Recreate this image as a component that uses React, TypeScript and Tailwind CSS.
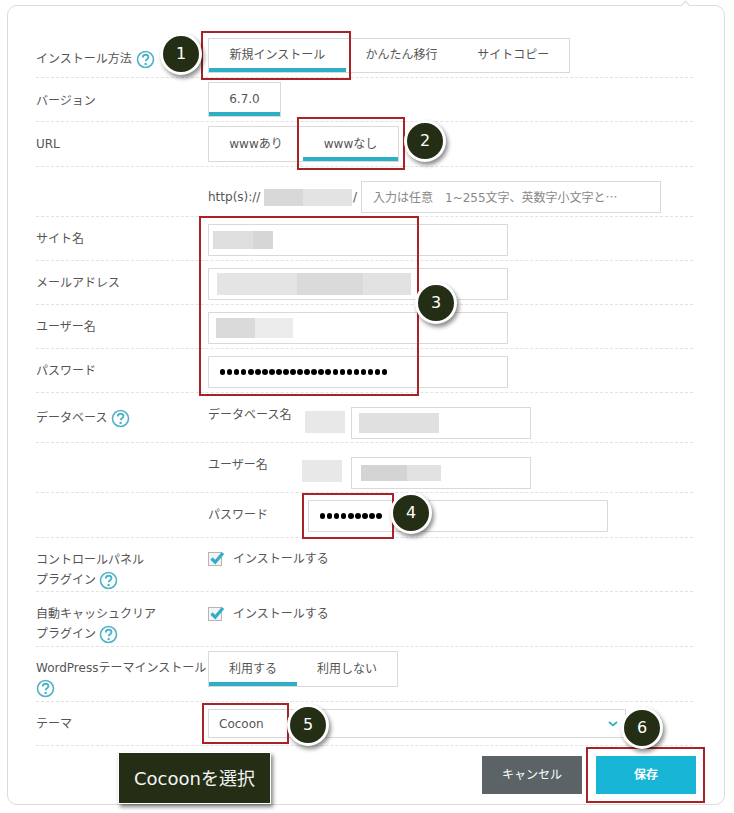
import React from 'react';

const font = { fontFamily: '"DejaVu Sans", "Noto Sans CJK JP", sans-serif' };

function Help({ className = '' }: { className?: string }) {
  return (
    <svg className={`inline-block w-[19px] h-[19px] ${className}`} viewBox="0 0 19 19" fill="none">
      <circle cx="9.5" cy="9.5" r="8" stroke="#4fb3c8" strokeWidth="1.6" />
      <path d="M6.8 7.4c0-1.6 1.2-2.6 2.8-2.6s2.8 1 2.8 2.3c0 1.1-.6 1.7-1.5 2.3-.8.5-1.2 1-1.2 1.8" stroke="#4fb3c8" strokeWidth="1.9" />
      <circle cx="9.6" cy="14" r="1.2" fill="#4fb3c8" />
    </svg>
  );
}

function Row({ h, pt, label, children }: { h: string; pt: string; label?: React.ReactNode; children?: React.ReactNode }) {
  return (
    <div className={`flex border-b border-dashed border-[#e2e2e2] ${h}`}>
      <div className="w-[172px] shrink-0 text-[12px] leading-[20px] text-[#555]">{label}</div>
      <div className={`flex-1 ${pt}`}>{children}</div>
    </div>
  );
}

function Tab({ text, w, active }: { text: string; w: string; active?: boolean }) {
  return (
    <div className={`relative flex items-center justify-center ${w}`}>
      <span className="mb-[1px]">{text}</span>
      {active && <div className="absolute left-0 right-0 bottom-0 h-[4px] bg-[#2eafc8]" />}
    </div>
  );
}

function Field({ w, h = 'h-[32px]', children }: { w: string; h?: string; children?: React.ReactNode }) {
  return <div className={`flex items-center border border-[#d9d9d9] bg-white ${w} ${h}`}>{children}</div>;
}

function Check({ pt }: { pt: string }) {
  return (
    <div className={`flex items-center gap-[11px] ${pt}`}>
      <div className="relative w-[14px] h-[14px] border border-[#b5b5b5] bg-[#f4f4f4]">
        <svg className="absolute left-0 -top-[3px] w-[17px] h-[16px]" viewBox="0 0 17 16" fill="none">
          <path d="M2.5 8.5l3.7 3.7L14 3" stroke="#2eafc8" strokeWidth="3.2" />
        </svg>
      </div>
      <span className="mt-[1px]">インストールする</span>
    </div>
  );
}

const redBoxes = [
  'left-[201px] top-[31px] w-[150px] h-[49px]',
  'left-[297px] top-[117px] w-[108px] h-[53px]',
  'left-[199px] top-[216px] w-[220px] h-[180px]',
  'left-[302px] top-[493px] w-[92px] h-[46px]',
  'left-[202px] top-[703px] w-[87px] h-[41px]',
  'left-[586px] top-[747px] w-[119px] h-[56px]',
];

const badges = [
  { n: '1', pos: 'left-[160px] top-[33px]' },
  { n: '2', pos: 'left-[404px] top-[120px]' },
  { n: '3', pos: 'left-[415px] top-[282px]' },
  { n: '4', pos: 'left-[390px] top-[492px]' },
  { n: '5', pos: 'left-[287px] top-[704px]' },
  { n: '6', pos: 'left-[621px] top-[707px]' },
];

export default function App() {
  return (
    <div className="relative w-[734px] h-[813px] bg-white overflow-hidden pt-[5px] pl-[7px] text-[12px] text-[#555]" style={font}>
      {/* Popover notch */}
      <div className="absolute left-[682px] top-[2px] w-[7px] h-[7px] rotate-45 border-l border-t border-[#d9d9d9] bg-white z-10" />

      <div className="w-[718px] h-[800px] border border-[#dcdcdc] rounded-[10px] pl-[28px] pt-[27px] bg-white">
        <div className="w-[657px]">
          <Row h="h-[45px]" pt="pt-[5px]" label={<div className="flex items-center gap-[4px] pt-[16px]">インストール方法<Help /></div>}>
            <div className="flex w-[362px] h-[35px] border border-[#d9d9d9]">
              <Tab text="新規インストール" w="w-[137px]" active />
              <Tab text="かんたん移行" w="w-[112px]" />
              <Tab text="サイトコピー" w="w-[112px]" />
            </div>
          </Row>
          <Row h="h-[44px]" pt="pt-[4px]" label={<div className="pt-[13px]">バージョン</div>}>
            <div className="flex w-[73px] h-[35px] border border-[#d9d9d9]">
              <Tab text="6.7.0" w="w-full" active />
            </div>
          </Row>
          <Row h="h-[45px]" pt="pt-[4px]" label={<div className="pt-[12px]">URL</div>}>
            <div className="flex w-[191px] h-[36px] border border-[#d9d9d9]">
              <Tab text="wwwあり" w="w-[94px]" />
              <Tab text="wwwなし" w="w-[95px]" active />
            </div>
          </Row>
          <Row h="h-[50px]" pt="pt-[14px]">
            <div className="flex items-center h-[32px]">
              <span className="w-[56px] whitespace-nowrap">http(s)://</span>
              <div className="flex w-[88px] h-[17px]">
                <div className="w-[39px] bg-[#d8d8d8]" />
                <div className="w-[49px] bg-[#e3e3e3]" />
              </div>
              <span className="ml-[1px] w-[8px]">/</span>
              <Field w="w-[300px]" h="h-[32px]">
                <span className="pl-[11px] text-[#888] whitespace-nowrap">
                  入力は任意　1~255文字、英数字小文字と<span className="font-['Noto_Sans_CJK_JP']">…</span>
                </span>
              </Field>
            </div>
          </Row>
          <Row h="h-[44px]" pt="pt-[7px]" label={<div className="pt-[12px]">サイト名</div>}>
            <Field w="w-[300px]">
              <div className="flex ml-[4px] h-[18px]">
                <div className="w-[40px] bg-[#dedede]" />
                <div className="w-[20px] bg-[#d6d6d6]" />
              </div>
            </Field>
          </Row>
          <Row h="h-[44px]" pt="pt-[7px]" label={<div className="pt-[12px]">メールアドレス</div>}>
            <Field w="w-[300px]">
              <div className="flex ml-[8px] h-[22px]">
                <div className="w-[80px] bg-[#e4e4e4]" />
                <div className="w-[66px] bg-[#dadada]" />
                <div className="w-[48px] bg-[#e2e2e2]" />
              </div>
            </Field>
          </Row>
          <Row h="h-[44px]" pt="pt-[7px]" label={<div className="pt-[12px]">ユーザー名</div>}>
            <Field w="w-[300px]">
              <div className="flex ml-[7px] h-[20px]">
                <div className="w-[39px] bg-[#dadada]" />
                <div className="w-[38px] bg-[#ececec]" />
              </div>
            </Field>
          </Row>
          <Row h="h-[44px]" pt="pt-[7px]" label={<div className="pt-[12px]">パスワード</div>}>
            <Field w="w-[300px]">
              <div className="flex ml-[11px] gap-[1.65px]">
                {Array.from({ length: 24 }).map((_, i) => (
                  <div key={i} className="w-[5.4px] h-[5.4px] rounded-full bg-black" />
                ))}
              </div>
            </Field>
          </Row>
          <Row h="h-[50px]" pt="pt-[14px]" label={<div className="flex items-center gap-[4px] pt-[15px]">データベース<Help /></div>}>
            <div className="flex h-[32px]">
              <span className="w-[97px] leading-[16px]">データベース名</span>
              <div className="w-[40px] h-[22px] mt-[4px] bg-[#e8e8e8]" />
              <Field w="w-[180px] ml-[6px]">
                <div className="ml-[7px] w-[80px] h-[20px] bg-[#e0e0e0]" />
              </Field>
            </div>
          </Row>
          <Row h="h-[50px]" pt="pt-[14px]">
            <div className="flex h-[32px]">
              <span className="w-[94px] leading-[16px]">ユーザー名</span>
              <div className="w-[40px] h-[22px] mt-[3px] bg-[#e8e8e8]" />
              <Field w="w-[180px] ml-[9px]">
                <div className="flex ml-[9px] h-[16px]">
                  <div className="w-[46px] bg-[#d4d4d4]" />
                  <div className="w-[34px] bg-[#e2e2e2]" />
                </div>
              </Field>
            </div>
          </Row>
          <Row h="h-[45px]" pt="pt-[7px]">
            <div className="flex items-center h-[32px]">
              <span className="w-[100px] -mt-[3px]">パスワード</span>
              <Field w="w-[300px]">
                <div className="flex ml-[11px] gap-[1.65px]">
                  {Array.from({ length: 9 }).map((_, i) => (
                    <div key={i} className="w-[5.4px] h-[5.4px] rounded-full bg-black" />
                  ))}
                </div>
              </Field>
            </div>
          </Row>
          <Row h="h-[54px]" pt="" label={<div className="pt-[12px]">コントロールパネル<div className="flex items-center gap-[3px]">プラグイン<Help /></div></div>}>
            <Check pt="pt-[11px]" />
          </Row>
          <Row h="h-[55px]" pt="" label={<div className="pt-[12px]">自動キャッシュクリア<div className="flex items-center gap-[3px]">プラグイン<Help /></div></div>}>
            <Check pt="pt-[12px]" />
          </Row>
          <Row h="h-[55px]" pt="pt-[4px]" label={<div className="pt-[11px] whitespace-nowrap">WordPressテーマインストール<div><Help /></div></div>}>
            <div className="flex w-[190px] h-[36px] border border-[#d9d9d9]">
              <Tab text="利用する" w="w-[88px]" active />
              <Tab text="利用しない" w="w-[100px]" />
            </div>
          </Row>
          <Row h="h-[44px]" pt="pt-[7px]" label={<div className="pt-[12px]">テーマ</div>}>
            <div className="flex items-center justify-between w-[418px] h-[29px] border border-[#d9d9d9] pl-[10px] pr-[7px]">
              <span>Cocoon</span>
              <svg className="w-[10px] h-[6px] mt-[1px]" viewBox="0 0 10 6" fill="none">
                <path d="M1 1l4 3.4L9 1" stroke="#2eafc8" strokeWidth="1.8" />
              </svg>
            </div>
          </Row>
          <div className="flex justify-end gap-[14px] pt-[10px] w-[660px]">
            <button className="w-[100px] h-[38px] bg-[#5c6366] text-white text-[12px]">キャンセル</button>
            <button className="w-[100px] h-[38px] bg-[#19b5d6] text-white text-[12px] font-bold">保存</button>
          </div>
        </div>
      </div>

      {/* Annotations over the form */}
      {redBoxes.map((pos) => (
        <div key={pos} className={`absolute border-2 border-[#a82226] ${pos}`} />
      ))}
      {badges.map((b) => (
        <div
          key={b.n}
          className={`absolute flex items-center justify-center w-[42px] h-[42px] rounded-full bg-[#232e15] border-[3px] border-white text-white text-[16px] shadow-[2px_3px_4px_rgba(0,0,0,0.45)] ${b.pos}`}
        >
          {b.n}
        </div>
      ))}
      <div className="absolute left-[118px] top-[752px] flex items-center justify-center w-[153px] h-[52px] bg-[#232e15] border border-white text-[#f4f4f4] text-[18px] shadow-[2px_3px_4px_rgba(0,0,0,0.5)]">
        Cocoonを選択
      </div>
    </div>
  );
}
